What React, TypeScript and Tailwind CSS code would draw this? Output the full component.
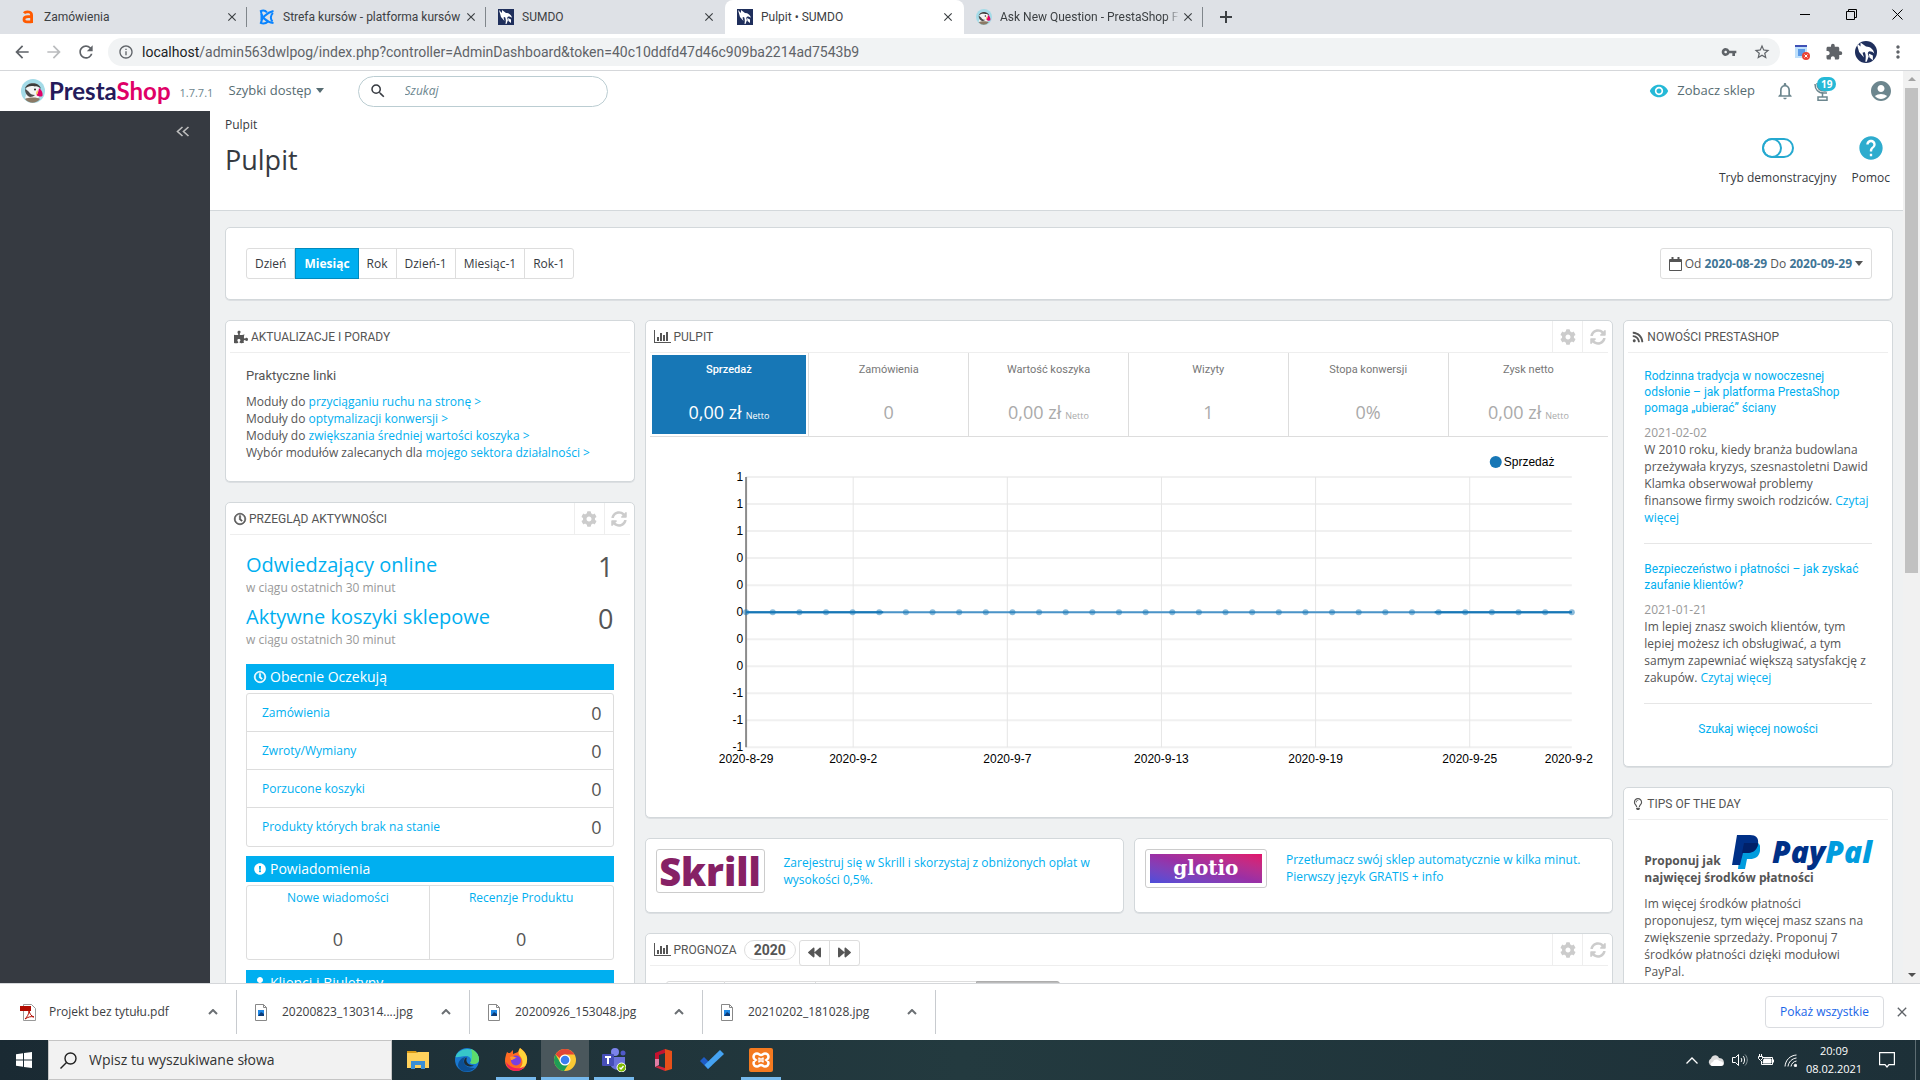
import type { ReactNode } from "react";
import {
  MdAccountCircle,
  MdArrowBack,
  MdArrowForward,
  MdClose,
  MdExtension,
  MdHelp,
  MdInfoOutline,
  MdMoreVert,
  MdNotificationsNone,
  MdRefresh,
  MdSearch,
  MdStarBorder,
  MdVisibility,
  MdVpnKey,
} from "react-icons/md";
import {
  FaBackward,
  FaCog,
  FaExclamationCircle,
  FaForward,
  FaPuzzlePiece,
  FaRegClock,
  FaRegLightbulb,
  FaRss,
  FaSyncAlt,
  FaUser,
} from "react-icons/fa";

const tabs = [
  { title: "Zamówienia", icon: <AllegroIcon /> },
  { title: "Strefa kursów - platforma kursów", icon: <StrefaIcon /> },
  { title: "SUMDO", icon: <SumdoIcon /> },
  { title: "Pulpit • SUMDO", icon: <SumdoIcon />, active: true },
  { title: "Ask New Question - PrestaShop F", icon: <PuffinIcon className="size-4" /> },
];

const periods = ["Dzień", "Miesiąc", "Rok", "Dzień-1", "Miesiąc-1", "Rok-1"];

const tips = [
  { text: "Moduły do", link: "przyciąganiu ruchu na stronę >" },
  { text: "Moduły do", link: "optymalizacji konwersji >" },
  { text: "Moduły do", link: "zwiększania średniej wartości koszyka >" },
  { text: "Wybór modułów zalecanych dla", link: "mojego sektora działalności >" },
];

const visitors = [
  { label: "Odwiedzający online", value: 1 },
  { label: "Aktywne koszyki sklepowe", value: 0 },
];

const pending = ["Zamówienia", "Zwroty/Wymiany", "Porzucone koszyki", "Produkty których brak na stanie"];

const kpis = [
  { label: "Sprzedaż", value: "0,00 zł", net: true, active: true },
  { label: "Zamówienia", value: "0" },
  { label: "Wartość koszyka", value: "0,00 zł", net: true },
  { label: "Wizyty", value: "1" },
  { label: "Stopa konwersji", value: "0%" },
  { label: "Zysk netto", value: "0,00 zł", net: true },
];

const news = [
  {
    title: "Rodzinna tradycja w nowoczesnej odsłonie – jak platforma PrestaShop pomaga „ubierać” ściany",
    date: "2021-02-02",
    text: "W 2010 roku, kiedy branża budowlana przeżywała kryzys, szesnastoletni Dawid Klamka obserwował problemy finansowe firmy swoich rodziców.",
  },
  {
    title: "Bezpieczeństwo i płatności – jak zyskać zaufanie klientów?",
    date: "2021-01-21",
    text: "Im lepiej znasz swoich klientów, tym lepiej możesz ich obsługiwać, a tym samym zapewniać większą satysfakcję z zakupów.",
  },
];

const downloads = [
  { name: "Projekt bez tytułu.pdf", pdf: true },
  { name: "20200823_130314....jpg" },
  { name: "20200926_153048.jpg" },
  { name: "20210202_181028.jpg" },
];

const condensed = "font-['Ubuntu_Condensed',Roboto,sans-serif]";

function AllegroIcon() {
  return (
    <svg viewBox="0 0 16 16" className="size-4 shrink-0" fill="none" stroke="#ff5a00" strokeWidth="2.8">
      <path d="M4 4.2C5 3 7 2.600 9 3c2 .4 2.600 1.600 2.600 3.200V14" />
      <path d="M11.500 7.600H8C5.500 7.600 4 8.600 4 10.400c0 1.600 1.200 2.400 3 2.400h4.500" />
    </svg>
  );
}

function StrefaIcon() {
  return (
    <svg viewBox="0 0 16 16" className="size-4 shrink-0" fill="none" stroke="#0a84ff" strokeWidth="2">
      <path d="M2 1.500C2 8 7 13 14.500 14M14.500 2C8 3.500 2 9 2 14.500" />
      <path d="M1 2.500C4 .8 6.500 1.500 8 3.500M1 13.500c3 1.700 6 1 8-1M14 4c-2.500 2-3 6-.5 8.500M2.500 5v6" />
    </svg>
  );
}

function SumdoIcon({ round }: { round?: boolean }) {
  return (
    <svg viewBox="0 0 16 16" className={round ? "size-[22px] shrink-0 rounded-full" : "size-4 shrink-0"}>
      <rect width="16" height="16" fill="#1f2f5c" />
      <path
        d="M1 1 4 4V1l4 3c3 0 5.500 2 6 5-1-1-2-1.500-3.500-1.500C9 8 9 9.500 10 11l-1.500 4H7.500C8 12 8 10 7 8L5.500 8.500 6.500 12 3 8z"
        fill="#fff"
      />
      <path d="m10 9 3 1.500V14l-2.500-2z" fill="#fff" />
    </svg>
  );
}

function PuffinIcon({ className }: { className: string }) {
  return (
    <svg viewBox="0 0 24 24" className={`${className} shrink-0`}>
      <circle cx="12" cy="12" r="12" fill="#a4dbe8" />
      <path d="M4 19c2-5 2-8 1-11 3-5 12-5 14 1l-1 9-3 4H7z" fill="#f4f4f4" />
      <path d="M4 10C5 3 18 2 20 10c-2-2-4-3-6-2.500C10 6.500 7 7 4 10z" fill="#3c3c3b" />
      <path d="M4 10c0 4 2 7 5 8 2 0 4-1 5-2-3 0-5-1-6-3-1-1-2-2-4-3z" fill="#4d4d4d" />
      <circle cx="14" cy="10.500" r="1" fill="#222" />
      <path d="M18 9c3 2 4 5 3.500 8-2 1-4.500.5-6-1 1.500-2 2-4 2.500-7z" fill="#df0067" />
      <path d="M16.500 11c.8 2 .5 3.500-.8 5-1-1-.6-3.500.8-5z" fill="#f5c34b" />
      <path d="M4 20c3-2 13-2 15 0-4 5-11 5-15 0z" fill="#8b7a66" />
    </svg>
  );
}

function ChartIcon() {
  return (
    <svg viewBox="0 0 17 13" className="h-[13px] w-[17px] shrink-0" fill="#555">
      <path d="M0 0h1v12h16v1H0z" />
      <path d="M3 7h2v4H3zM6 3h2v8H6zM9 5h2v6H9zM12 2h2v9h-2z" />
    </svg>
  );
}

function ClockIcon() {
  return <FaRegClock className="size-3 shrink-0 overflow-visible" stroke="currentColor" strokeWidth="24" />;
}

function Caret() {
  return (
    <svg viewBox="0 0 8 5" className="h-[5px] w-2 shrink-0" fill="currentColor">
      <path d="M0 0h8L4 5z" />
    </svg>
  );
}

function PanelButtons() {
  return (
    <div className="-mr-1 ml-auto flex self-stretch text-[#ccc]">
      <button aria-label="Konfiguruj" className="flex w-[30px] items-center justify-center border-l border-[#eee]">
        <FaCog className="size-4" />
      </button>
      <button aria-label="Odśwież" className="flex w-[30px] items-center justify-center border-l border-[#eee]">
        <FaSyncAlt className="size-4" />
      </button>
    </div>
  );
}

function Panel({ children }: { children: ReactNode }) {
  return (
    <section className="mb-5 rounded-[5px] border border-[#d3d8db] bg-white shadow-[0_1px_0_#dcdfe2]">{children}</section>
  );
}

function PanelHeading({ icon, title, children }: { icon: ReactNode; title: string; children?: ReactNode }) {
  return (
    <div className="mx-1 flex h-8 items-center gap-[3px] border-b border-[#eee] pl-1">
      {icon}
      <h3 className={`text-xs text-[#555] uppercase ${condensed}`}>{title}</h3>
      {children}
    </div>
  );
}

function SectionBar({ icon, title }: { icon: ReactNode; title: string }) {
  return (
    <h4 className="flex h-[26px] items-center gap-1 bg-[#00aff0] px-2 text-sm text-white">
      {icon}
      {title}
    </h4>
  );
}

function BrowserChrome() {
  return (
    <header className="shrink-0 font-[Roboto,sans-serif] text-[#3c4043]">
      <div className="flex h-[34px] items-stretch bg-[#dee1e6] pl-2 text-xs">
        {tabs.map((tab, idx) => (
          <div
            key={idx}
            className={
              tab.active
                ? "flex w-[239px] items-center rounded-t-lg bg-white pr-2 pl-3"
                : "flex w-[239px] items-center pr-2 pl-3"
            }
          >
            {tab.icon}
            <span
              className={
                idx === 4
                  ? "ml-2 min-w-0 flex-1 overflow-hidden [mask-image:linear-gradient(to_right,#000_92%,transparent)] whitespace-nowrap"
                  : "ml-2 min-w-0 flex-1 whitespace-nowrap"
              }
            >
              {tab.title}
            </span>
            <button aria-label="Zamknij kartę" className="flex size-4 shrink-0 items-center justify-center">
              <MdClose className="size-[14px]" />
            </button>
            {!tab.active && idx !== 2 && <span className="-mr-2 ml-[6px] h-5 w-px bg-[#80868b]" />}
          </div>
        ))}
        <button aria-label="Nowa karta" className="ml-4">
          <svg viewBox="0 0 14 14" className="size-[14px]" stroke="#3c4043" strokeWidth="2">
            <path d="M7 1v12M1 7h12" />
          </svg>
        </button>
        <div className="ml-auto flex pb-[6px] text-black">
          <button aria-label="Minimalizuj" className="flex w-[46px] items-center justify-center">
            <span className="h-px w-[10px] bg-black" />
          </button>
          <button aria-label="Przywróć" className="flex w-[46px] items-center justify-center">
            <svg viewBox="0 0 11 11" className="size-[11px]" fill="none" stroke="#000">
              <path d="M.5 2.500h8v8h-8zM2.500 2.500v-2h8v8h-2" />
            </svg>
          </button>
          <button aria-label="Zamknij" className="flex w-[46px] items-center justify-center">
            <svg viewBox="0 0 11 11" className="size-[11px]" fill="none" stroke="#000">
              <path d="m.5.5 10 10M10.500.5l-10 10" />
            </svg>
          </button>
        </div>
      </div>
      <div className="flex h-[37px] items-center border-b border-[#d5d7da] bg-white pr-[6px] pl-3 text-[#5f6368]">
        <div className="flex w-24 items-center gap-3">
          <button aria-label="Wstecz"><MdArrowBack className="size-5" /></button>
          <button aria-label="Dalej"><MdArrowForward className="size-5 text-[#babcbe]" /></button>
          <button aria-label="Odśwież stronę"><MdRefresh className="size-5" /></button>
        </div>
        <label className="flex h-7 flex-1 items-center gap-2 rounded-full bg-[#f1f3f4] pr-[9px] pl-[10px]">
          <MdInfoOutline className="size-4" />
          <span className="flex-1 text-sm">
            <span className="text-[#202124]">localhost</span>
            /admin563dwlpog/index.php?controller=AdminDashboard&amp;token=40c10ddfd47d46c909ba2214ad7543b9
          </span>
          <MdVpnKey className="mr-2 size-4" />
          <MdStarBorder className="size-[18px]" />
        </label>
        <div className="grid grid-cols-4 justify-items-center pl-[6px]">
          <div className="flex w-8 items-center justify-center">
            <svg viewBox="0 0 16 16" className="size-4">
              <path d="M1 1h12v13H1z" fill="#bfe0fb" />
              <path d="M1 1h12v2H1z" fill="#3f51b5" />
              <path d="M4 5h7v7H4z" fill="#5c9be8" />
              <circle cx="12" cy="12" r="4" fill="#ea4335" />
              <path d="m10.500 10.500 3 3m0-3-3 3" stroke="#fff" />
            </svg>
          </div>
          <div className="flex w-8 items-center justify-center">
            <MdExtension className="size-[18px]" />
          </div>
          <div className="flex w-8 items-center justify-center">
            <SumdoIcon round />
          </div>
          <div className="flex w-8 items-center justify-center">
            <MdMoreVert className="size-5" />
          </div>
        </div>
      </div>
    </header>
  );
}

function ShopHeader() {
  return (
    <header className="flex h-10 shrink-0 items-center bg-white pr-[10px] pl-[21px] text-[13px] text-[#576c72]">
      <a href="#" className="flex items-center gap-1">
        <PuffinIcon className="size-6" />
        <span className="font-[Lato,sans-serif] text-2xl leading-8 font-bold text-[#251b5b]">
          Presta<span className="text-[#df0067]">Shop</span>
        </span>
      </a>
      <span className="w-[58px] pt-1 pl-[9px] text-[11px] text-[#6c868e]">1.7.7.1</span>
      <button className="flex items-center gap-1">
        Szybki dostęp
        <Caret />
      </button>
      <label className="ml-[34px] flex h-[31px] w-[250px] items-center gap-[18px] rounded-full border border-[#bbcdd2] px-[10px]">
        <MdSearch className="size-[18px] text-[#363a41]" />
        <input
          aria-label="Szukaj"
          placeholder="Szukaj"
          className="min-w-0 flex-1 text-xs italic outline-none placeholder:text-[#6c868e]"
        />
      </label>
      <div className="ml-auto flex items-center">
        <a href="#" className="flex items-center gap-2">
          <MdVisibility className="size-5 text-[#25b9d7]" />
          Zobacz sklep
        </a>
        <button aria-label="Powiadomienia" className="ml-5">
          <MdNotificationsNone className="size-5 text-[#6c868e]" />
        </button>
        <button aria-label="Osiągnięcia" className="relative ml-[18px]">
          <svg viewBox="0 0 18 20" className="h-5 w-[18px]" fill="none" stroke="#6c868e" strokeWidth="1.500">
            <path d="M4 2c0 5 3 8 8 8l4-1M2 3c0 5 3 9 9 9h3M9.500 12v4M5 16h9v3.200H5z" />
          </svg>
          <span className="absolute -top-1 left-1 rounded-full bg-[#25b9d7] px-1 text-[10px] leading-[14px] font-bold text-white">
            19
          </span>
        </button>
        <button aria-label="Konto" className="ml-[38px]">
          <MdAccountCircle className="size-6 text-[#6c868e]" />
        </button>
      </div>
    </header>
  );
}

function PageHead() {
  return (
    <div className="flex h-[100px] items-start justify-between border-b border-[#d3d8db] bg-white pt-[5px] pr-[13px] pl-[15px] text-[#363a41]">
      <div>
        <p className="text-xs leading-[18px]">Pulpit</p>
        <h1 className="mt-2 text-[27px] leading-9">Pulpit</h1>
      </div>
      <div className="flex gap-[15px] pt-[18px] text-xs">
        <button className="flex flex-col items-center gap-2">
          <span className="flex h-7 items-center">
            <svg viewBox="0 0 32 20" className="h-5 w-8" fill="none" stroke="#25a9d0" strokeWidth="2">
              <rect x="1" y="1" width="30" height="18" rx="9" />
              <circle cx="10" cy="10" r="9" />
            </svg>
          </span>
          Tryb demonstracyjny
        </button>
        <button className="flex flex-col items-center gap-2">
          <MdHelp className="size-7 text-[#2eacce]" />
          Pomoc
        </button>
      </div>
    </div>
  );
}

function SalesChart() {
  const ticks = ["1", "1", "1", "0", "0", "0", "0", "0", "-1", "-1", "-1"];
  const dates = [
    { x: 96, label: "2020-8-29" },
    { x: 203, label: "2020-9-2" },
    { x: 357, label: "2020-9-7" },
    { x: 511, label: "2020-9-13" },
    { x: 665, label: "2020-9-19" },
    { x: 819, label: "2020-9-25" },
    { x: 918, label: "2020-9-2" },
  ];
  return (
    <svg viewBox="0 0 958 380" className="mx-auto block h-auto w-full font-['Liberation_Sans',Arial,sans-serif] text-xs">
      <circle cx="845" cy="25" r="6" fill="#1777b6" />
      <text x="853" y="29">Sprzedaż</text>
      {ticks.map((tick, idx) => (
        <g key={idx}>
          <path d={`M96 ${40 + idx * 27}H921`} stroke="#f0f0f0" strokeWidth="2" />
          <text x="93" y={44 + idx * 27} textAnchor="end">{tick}</text>
        </g>
      ))}
      {dates.map((date, idx) => (
        <g key={idx}>
          {idx > 0 && idx < 6 && <path d={`M${date.x} 40V310`} stroke="#e6e6e6" />}
          <text x={date.x} y="326" textAnchor="middle">{date.label}</text>
        </g>
      ))}
      <path d="M96 40V310" stroke="#8c8c8c" strokeWidth="2" />
      <path d="M96 175H921" stroke="#4a94c9" strokeWidth="2" />
      <path d="M96 175H233M784 175H921" stroke="#1777b6" strokeWidth="2" />
      {Array.from({ length: 32 }, (_, idx) => (
        <circle key={idx} cx={96 + (idx * 825) / 31} cy="175" r="3" fill="#1777b6" fillOpacity="0.5" />
      ))}
    </svg>
  );
}

function LeftColumn() {
  return (
    <div className="col-span-3">
      <Panel>
        <PanelHeading icon={<FaPuzzlePiece className="size-[14px]" />} title="Aktualizacje i porady" />
        <div className="px-5 pt-[15px] pb-5">
          <h4 className={`text-[13px] leading-4 ${condensed}`}>Praktyczne linki</h4>
          <ul className="mt-[9px] leading-[17px]">
            {tips.map((tip) => (
              <li key={tip.link}>
                {tip.text} <a href="#" className="text-[#00aff0]">{tip.link}</a>
              </li>
            ))}
          </ul>
        </div>
      </Panel>

      <Panel>
        <PanelHeading icon={<ClockIcon />} title="Przegląd aktywności">
          <PanelButtons />
        </PanelHeading>
        <div className="px-5 pt-4 pb-5">
          <div className="space-y-[6px]">
            {visitors.map((item) => (
              <div key={item.label} className="flex justify-between">
                <div>
                  <a href="#" className="block text-xl leading-7 text-[#00aff0]">{item.label}</a>
                  <small className="block text-xs leading-[18px] text-[#999]">w ciągu ostatnich 30 minut</small>
                </div>
                <span className="text-[27px] leading-8">{item.value}</span>
              </div>
            ))}
          </div>
          <div className="mt-[15px]">
            <SectionBar icon={<ClockIcon />} title="Obecnie Oczekują" />
            <ul className="mt-[3px] divide-y divide-[#ddd] rounded-[3px] border border-[#ddd]">
              {pending.map((item) => (
                <li key={item} className="flex h-[38px] items-center justify-between pr-[11px] pl-[15px]">
                  <a href="#" className="text-[#00aff0]">{item}</a>
                  <span className="text-lg">0</span>
                </li>
              ))}
            </ul>
          </div>
          <div className="mt-[9px]">
            <SectionBar icon={<FaExclamationCircle className="size-3" />} title="Powiadomienia" />
            <div className="mt-[3px] grid grid-cols-2 divide-x divide-[#ddd] rounded-[3px] border border-[#ddd] text-center">
              {["Nowe wiadomości", "Recenzje Produktu"].map((item) => (
                <div key={item} className="flex h-[73px] flex-col justify-between pt-1 pb-2">
                  <a href="#" className="leading-4 text-[#00aff0]">{item}</a>
                  <span className="text-lg leading-6">0</span>
                </div>
              ))}
            </div>
          </div>
          <div className="mt-[10px]">
            <SectionBar icon={<FaUser className="size-3" />} title="Klienci i Biuletyny" />
          </div>
        </div>
      </Panel>
    </div>
  );
}

function MiddleColumn() {
  return (
    <div className="col-span-7">
      <Panel>
        <PanelHeading icon={<ChartIcon />} title="Pulpit">
          <PanelButtons />
        </PanelHeading>
        <div className="mx-1 grid grid-cols-6 divide-x divide-[#ddd] border-b border-[#ddd]">
          {kpis.map((kpi) => (
            <div key={kpi.label} className="p-[2px]">
              <button
                className={
                  kpi.active
                    ? "flex h-[79px] w-full flex-col items-center justify-between bg-[#1777b6] pt-[6px] pb-[10px] text-white"
                    : "flex h-[79px] w-full flex-col items-center justify-between pt-[6px] pb-[10px] text-[#aaa]"
                }
              >
                <span
                  className={
                    kpi.active
                      ? `text-[11px] leading-[18px] font-medium ${condensed}`
                      : `text-[11px] leading-[18px] text-[#777] ${condensed}`
                  }
                >
                  {kpi.label}
                </span>
                <span className="flex items-baseline gap-1 text-lg leading-6">
                  {kpi.value} {kpi.net && <small className="text-[9px] leading-none">Netto</small>}
                </span>
              </button>
            </div>
          ))}
        </div>
        <div className="mx-1">
          <SalesChart />
        </div>
      </Panel>

      <div className="grid grid-cols-2 gap-[10px]">
        <Panel>
          <div className="flex h-[73px] items-start pt-[10px] pr-5 pl-[10px]">
            <div className="flex h-11 w-[109px] shrink-0 items-center justify-center rounded-[3px] border border-[#ccc] text-[38px] leading-none font-extrabold text-[#862165]">
              Skrill
            </div>
            <a href="#" className="mt-[5px] ml-[19px] leading-[17px] text-[#00aff0]">
              Zarejestruj się w Skrill i skorzystaj z obniżonych opłat w wysokości 0,5%.
            </a>
          </div>
        </Panel>
        <Panel>
          <div className="flex h-[73px] items-start pt-[10px] pr-5 pl-[10px]">
            <div className="h-[39px] w-[122px] shrink-0 rounded-[3px] border border-[#ccc] p-1">
              <div className="flex h-full items-center justify-center bg-linear-to-tr from-[#4b4ddb] via-[#9a2fa5] to-[#e2106a] pb-[2px] font-['DejaVu_Serif',serif] text-xl font-bold text-white">
                glotio
              </div>
            </div>
            <a href="#" className="mt-[2px] ml-[19px] leading-[17px] text-[#00aff0]">
              Przetłumacz swój sklep automatycznie w kilka minut. Pierwszy język GRATIS + info
            </a>
          </div>
        </Panel>
      </div>

      <Panel>
        <PanelHeading icon={<ChartIcon />} title="Prognoza">
          <span className={`ml-1 rounded-full border border-[#ddd] px-[9px] text-sm leading-[18px] font-bold ${condensed}`}>
            2020
          </span>
          <div className="mt-[6px] flex h-[26px] divide-x divide-[#ddd] rounded-[3px] border border-[#ddd]">
            <button aria-label="Poprzedni rok" className="flex w-[30px] items-center justify-center">
              <FaBackward className="size-[13px]" />
            </button>
            <button aria-label="Następny rok" className="flex w-[29px] items-center justify-center">
              <FaForward className="size-[13px]" />
            </button>
          </div>
          <PanelButtons />
        </PanelHeading>
        <div className="flex px-5 pt-[15px] pb-5">
          <div className="h-[31px] w-[59px] rounded-l-[3px] border border-[#ddd]" />
          <div className="h-[31px] w-[91px] border-y border-r border-[#ddd]" />
          <div className="h-[31px] w-[160px] border-y border-[#ddd]" />
          <div className="h-[31px] w-[84px] rounded-r-[3px] border border-[#adadad] bg-[#bbb]" />
        </div>
      </Panel>
    </div>
  );
}

function RightColumn() {
  return (
    <div className="col-span-2">
      <Panel>
        <PanelHeading icon={<FaRss className="size-3" />} title="Nowości PrestaShop" />
        <div className="px-5 pt-[15px] pb-[29px]">
          {news.map((item) => (
            <article key={item.date} className="mb-[17px] border-b border-[#e6e6e6] pb-[17px] leading-[17px]">
              <h4 className={`mb-2 text-xs leading-4 ${condensed}`}>
                <a href="#" className="text-[#00aff0]">{item.title}</a>
              </h4>
              <p className="text-[#999]">{item.date}</p>
              <p>
                {item.text} <a href="#" className="text-[#00aff0]">Czytaj więcej</a>
              </p>
            </article>
          ))}
          <p className={`text-center text-xs leading-4 ${condensed}`}>
            <a href="#" className="text-[#00aff0]">Szukaj więcej nowości</a>
          </p>
        </div>
      </Panel>

      <Panel>
        <PanelHeading icon={<FaRegLightbulb className="size-3" />} title="Tips of the day" />
        <div className="px-5 pt-[15px] pb-5 leading-[17px]">
          <div className="flex items-end justify-between font-bold">
            <span>Proponuj jak</span>
            <span className="flex items-center gap-3">
              <svg viewBox="0 0 28 34" className="h-[34px] w-7">
                <path d="M9 7h15c4 1 5 5 4 9-1 6-5 8-10 8h-3l-2 10H6z" fill="#009cde" />
                <path d="M5 0h13c6 0 9 3 8 9-1 7-6 9-11 9h-4L8 30H0z" fill="#003087" />
                <path d="M12 8h14c0 6-5 10-11 10h-5z" fill="#012169" />
              </svg>
              <span className="text-[30px] leading-8 font-extrabold text-[#003087] italic">
                Pay<span className="text-[#009cde]">Pal</span>
              </span>
            </span>
          </div>
          <p className="font-bold">najwięcej środków płatności</p>
          <p className="mt-[9px]">
            Im więcej środków płatności proponujesz, tym więcej masz szans na zwiększenie sprzedaży. Proponuj 7 środków
            płatności dzięki modułowi PayPal.
          </p>
        </div>
      </Panel>
    </div>
  );
}

function Downloads() {
  return (
    <div className="flex h-[57px] shrink-0 items-center border-t border-[#d5d7da] bg-white pl-1 text-[#3c4043]">
      {downloads.map((file) => (
        <div key={file.name} className="flex h-11 w-[233px] items-center border-r border-[#c8cbcf] pr-[18px] pl-4 text-xs">
          {file.pdf ? (
            <svg viewBox="0 0 16 17" className="h-[17px] w-4">
              <path d="M3.500.5h8l4 4v12h-12z" fill="#fff" stroke="#999" />
              <path d="M0 2h11v5H0z" fill="#b30b00" />
              <path d="M9 7c0 3-2 6-4 8 3-2 6-3 9-2-3-1-4-3-5-6z" fill="none" stroke="#b30b00" />
            </svg>
          ) : (
            <svg viewBox="0 0 16 17" className="h-[17px] w-4">
              <path d="M2.500.5h8l3 3v13h-11z" fill="#fff" stroke="#888" />
              <path d="M10.500.5v3h3" fill="none" stroke="#888" />
              <path d="M5 6h6v6H5z" fill="#1e88e5" />
              <path d="m5 12 3-4 3 2v2z" fill="#0d3c78" />
            </svg>
          )}
          <span className="ml-[13px] flex-1">{file.name}</span>
          <button aria-label="Opcje pliku">
            <svg viewBox="0 0 10 6" className="h-[6px] w-[10px]" fill="none" stroke="#6b6f73" strokeWidth="2">
              <path d="m1 5 4-4 4 4" />
            </svg>
          </button>
        </div>
      ))}
      <button className="ml-auto h-8 w-[119px] rounded-[4px] border border-[#dadce0] text-xs text-[#1a66e8]">
        Pokaż wszystkie
      </button>
      <button aria-label="Zamknij pasek" className="mx-[10px] text-[#5f6368]">
        <MdClose className="size-4" />
      </button>
    </div>
  );
}

function Taskbar() {
  const apps = [
    {
      name: "Eksplorator",
      icon: (
        <>
          <path d="M1 3h9l2 3H1z" fill="#d99a16" />
          <path d="M1 5h9l2-1h11v16H1z" fill="#ffd15c" />
          <path d="M5 13h14v8h-4v-4H9v4H5z" fill="#3a8fd6" />
        </>
      ),
    },
    {
      name: "Edge",
      icon: (
        <>
          <circle cx="12" cy="12" r="12" fill="#1a78cf" />
          <path d="M.5 9C3-1 22-3 24 11c0 5-5 6-9 4 2-2 1-7-4-7S2 10 .5 9z" fill="#37c6c9" />
          <path d="M16 1c5 2 8 6 8 10 0 5-5 6-9 4 2-2 3-9 1-14z" fill="#5ddb6c" />
          <path d="M11 9c-5 3-2 12 9 11-5 5-14 5-17-2 0-5 4-9 8-9z" fill="#0c4f93" />
          <path d="M12 9.500c-2 4 1 8 7 8-3 2-10 1-10-4 0-2 1-4 3-4z" fill="#1d2c35" />
        </>
      ),
    },
    {
      name: "Firefox",
      open: true,
      icon: (
        <>
          <path d="M3 4c1 1 2 1 3 1l3-3v4l5-2 2-4c5 3 7 7 7 12 0 7-5 11-11 11S1 19 1 13c0-4 1-6 2-9z" fill="#ff6b22" />
          <path d="M16 0c5 4 8 8 7 13-1 7-6 9-9 9 5-4 6-9 2-14-2-2-2-5 0-8z" fill="#ffd43a" />
          <path d="M2 14c1 6 5 9 10 9 4 0 7-2 9-5-6 4-14 3-19-4z" fill="#f0205c" />
          <circle cx="12" cy="12.500" r="5" fill="#7a3fe0" />
          <path d="M6 9c3-1 5 0 7 1-3 0-3 2-6 2z" fill="#ff9a2e" />
        </>
      ),
    },
    {
      name: "Chrome",
      open: true,
      focused: true,
      icon: (
        <>
          <circle cx="12" cy="12" r="11" fill="#fbc934" />
          <path d="M2.500 6.500A11 11 0 0 1 21.500 6.500H12a5.500 5.500 0 0 0-5 4z" fill="#e24536" />
          <path d="M2.500 6.500A11 11 0 0 0 11 23l4.800-7.500a5.500 5.500 0 0 1-8.600-1z" fill="#1f9d55" />
          <circle cx="12" cy="12" r="5.500" fill="#fff" />
          <circle cx="12" cy="12" r="4.300" fill="#3b7df0" />
        </>
      ),
    },
    {
      name: "Teams",
      open: true,
      icon: (
        <>
          <circle cx="13" cy="4" r="4" fill="#7b83eb" />
          <circle cx="21" cy="5" r="2.500" fill="#5059c9" />
          <path d="M8 9h15v7c0 4-3 6-7 6s-8-3-8-7z" fill="#6a72dc" />
          <rect y="6" width="12" height="12" rx="1" fill="#464eb8" />
          <path d="M3 9h6M6 9v7" stroke="#fff" strokeWidth="2" />
          <circle cx="19.500" cy="19.500" r="4.500" fill="#7fba00" stroke="#fff" />
          <path d="m17.500 19.500 1.500 1.500 2.500-3" stroke="#fff" strokeWidth="1.400" fill="none" />
        </>
      ),
    },
    {
      name: "Office",
      icon: (
        <>
          <path d="M14 1 4 5v14l4-2V7l6-2z" fill="#c4122f" />
          <path d="m14 1 7 2v18l-7 2z" fill="#e8501a" />
          <path d="m4 19 10 4v-3L8 18z" fill="#d8233b" />
          <path d="M4 11v8l4-2v-6z" fill="#e07fa6" />
        </>
      ),
    },
    {
      name: "To Do",
      icon: (
        <>
          <path d="m0 13 4-4 8 8-4 4z" fill="#1e5cc6" />
          <path d="M8 21 4.500 17 20 2l4 4z" fill="#45a3f2" />
        </>
      ),
    },
    {
      name: "XAMPP",
      open: true,
      icon: (
        <>
          <rect width="24" height="24" rx="2" fill="#f47a20" />
          <path
            d="M8 5.500C6 5.500 4.500 7 4.500 9c0 1.500 1 2.300 2 3-1 .7-2 1.500-2 3 0 2 1.500 3.500 3.500 3.500s2-1.500 4-1.500 2 1.500 4 1.500 3.500-1.500 3.500-3.500c0-1.500-1-2.300-2-3 1-.7 2-1.500 2-3 0-2-1.500-3.500-3.500-3.500S14 7 12 7s-2-1.500-4-1.500z"
            fill="none"
            stroke="#fff"
            strokeWidth="2.500"
          />
          <path d="M10 9.500v1.500h4V9.500M10 14.500V13h4v1.500" fill="none" stroke="#fff" strokeWidth="1.500" />
        </>
      ),
    },
  ];

  return (
    <footer className="flex h-10 shrink-0 items-stretch bg-linear-to-r from-[#1a2a33] via-[#233a3f] to-[#1d3038] text-white">
      <button aria-label="Start" className="flex w-12 items-center justify-center">
        <svg viewBox="0 0 16 16" className="size-4" fill="#fff">
          <path d="m0 2.200 7-1v6.300H0zM8 1l8-1v7.500H8zM0 8.500h7v6.300l-7-1zM8 8.500h8V16l-8-1z" />
        </svg>
      </button>
      <label className="flex w-[344px] items-center gap-3 border border-[#c5c5c5] bg-[#f2f2f2] px-[11px] text-[#333]">
        <svg viewBox="0 0 17 17" className="size-[17px]" fill="none" stroke="#222" strokeWidth="1.400">
          <circle cx="10.500" cy="6.500" r="5.500" />
          <path d="m6.500 10.500-6 6" />
        </svg>
        <input
          aria-label="Wyszukaj"
          placeholder="Wpisz tu wyszukiwane słowa"
          className="min-w-0 flex-1 text-sm outline-none placeholder:text-[#333]"
        />
      </label>
      <div className="flex gap-px pl-[2px]">
        {apps.map((app) => (
          <button
            key={app.name}
            aria-label={app.name}
            className={
              app.focused
                ? "flex w-12 flex-col items-center bg-[#4a575c] pt-2"
                : "flex w-12 flex-col items-center px-1 pt-2"
            }
          >
            <svg viewBox="0 0 24 24" className="size-6">{app.icon}</svg>
            {app.open && <span className="mt-auto h-[3px] w-full bg-[#76b9ed]" />}
          </button>
        ))}
      </div>
      <div className="ml-auto flex items-center">
        <svg viewBox="0 0 12 7" className="h-[7px] w-3" fill="none" stroke="#fff" strokeWidth="1.300">
          <path d="m.5 6.500 5.500-5.500 5.500 5.500" />
        </svg>
        <svg viewBox="0 0 16 11" className="ml-[10px] h-[11px] w-4">
          <path d="M4 11a4 4 0 0 1-1-7.500C4.500-.5 9.500-1 11 3c4 0 5 3 5 5s-1 3-3 3z" fill="#ddd" />
          <path d="M4 11c-2-1-1-4 1-4 1-3 5-3 6-1 2 0 5 1 4 4l-2 1z" fill="#fff" />
        </svg>
        <svg viewBox="0 0 16 14" className="ml-2 h-[14px] w-4" fill="none" stroke="#fff">
          <path d="M.5 4.500h3l3-3v11l-3-3h-3zM9 5c1 1 1 3 0 4M11 3c2 2 2 6 0 8" />
          <path d="M13 1.500c3 3 3 8 0 11" stroke="#8a979b" />
        </svg>
        <svg viewBox="0 0 16 12" className="ml-[10px] h-3 w-4" fill="none" stroke="#fff">
          <path d="M5 3.500h9.500v7H3.500V7M15.500 5.500v3M.5 2.500h4v2l-2 2-2-2zM1.500 0v2M3.500 0v2" />
          <path d="M6 5h7v4H5z" fill="#fff" />
        </svg>
        <svg viewBox="0 0 13 13" className="ml-[10px] size-[13px]" fill="none" stroke="#fff">
          <path d="M12.500 1C6 1.500 1.500 6 1 12.500M12.500 4C8 4.500 4.500 8 4 12.500M12.500 7C9.500 7.500 7.500 9.500 7 12.500" />
          <circle cx="11.500" cy="11.500" r="1.200" fill="#fff" />
        </svg>
        <div className="ml-2 w-[58px] text-center text-[11px] leading-[18px]">
          <div>20:09</div>
          <div>08.02.2021</div>
        </div>
        <svg viewBox="0 0 16 16" className="mr-5 ml-4 size-4" fill="none" stroke="#fff" strokeWidth="1.200">
          <path d="M.6.6h14.800v12H10l-2 2.400-2-2.400H.6z" />
        </svg>
        <span className="mr-1 h-10 w-px bg-[#5d6c72]" />
      </div>
    </footer>
  );
}

export default function App() {
  return (
    <div className="flex h-screen flex-col overflow-hidden font-['Open_Sans',sans-serif] text-xs text-[#555]">
      <BrowserChrome />
      <div className="flex min-h-0 flex-1">
        <div className="flex min-w-0 flex-1 flex-col">
          <ShopHeader />
          <div className="flex min-h-0 flex-1">
            <nav className="w-[210px] shrink-0 bg-[#363a41] pt-[15px] pr-5 text-[#bebebe]">
              <button aria-label="Zwiń menu" className="ml-auto block">
                <svg viewBox="0 0 14 11" className="h-[11px] w-[14px]" fill="none" stroke="#bebebe" strokeWidth="1.600">
                  <path d="m6.500 1-5 4.500 5 4.500M12.500 1l-5 4.500 5 4.500" />
                </svg>
              </button>
            </nav>
            <main className="min-w-0 flex-1 overflow-hidden bg-[#eff1f2]">
              <PageHead />
              <div className="pt-4 pr-[10px] pl-[15px]">
                <Panel>
                  <div className="flex items-center justify-between p-5">
                    <div className="flex divide-x divide-[#ddd] rounded-[3px] border border-[#ddd] text-[#363a41]">
                      {periods.map((period) => (
                        <button
                          key={period}
                          className={
                            period === "Miesiąc"
                              ? "-my-px h-[31px] border border-[#008abd] bg-[#00aff0] px-2 font-bold text-white"
                              : "h-[29px] px-2"
                          }
                        >
                          {period}
                        </button>
                      ))}
                    </div>
                    <button className="flex h-[31px] items-center gap-[3px] rounded-[3px] border border-[#ddd] px-2">
                      <svg viewBox="0 0 13 14" className="h-[14px] w-[13px]" fill="none" stroke="#555">
                        <path d="M.5 2.500h12v11H.5z" />
                        <path d="M0 4h13" strokeWidth="2" />
                        <path d="M3.500 0v4M9.500 0v4" strokeWidth="2" />
                      </svg>
                      <span>
                        Od <b className="text-[#3f7596]">2020-08-29</b> Do <b className="text-[#3f7596]">2020-09-29</b>
                      </span>
                      <Caret />
                    </button>
                  </div>
                </Panel>
                <div className="grid grid-cols-12 items-start gap-[10px]">
                  <LeftColumn />
                  <MiddleColumn />
                  <RightColumn />
                </div>
              </div>
            </main>
          </div>
        </div>
        <div className="flex w-[17px] shrink-0 flex-col items-center bg-[#f1f1f1] py-[6px]">
          <span className="border-x-4 border-b-4 border-x-transparent border-b-[#a3a3a3]" />
          <span className="mt-[7px] h-[485px] w-[13px] bg-[#c1c1c1]" />
          <span className="mt-auto border-x-4 border-t-4 border-x-transparent border-t-[#505050]" />
        </div>
      </div>
      <Downloads />
      <Taskbar />
    </div>
  );
}
